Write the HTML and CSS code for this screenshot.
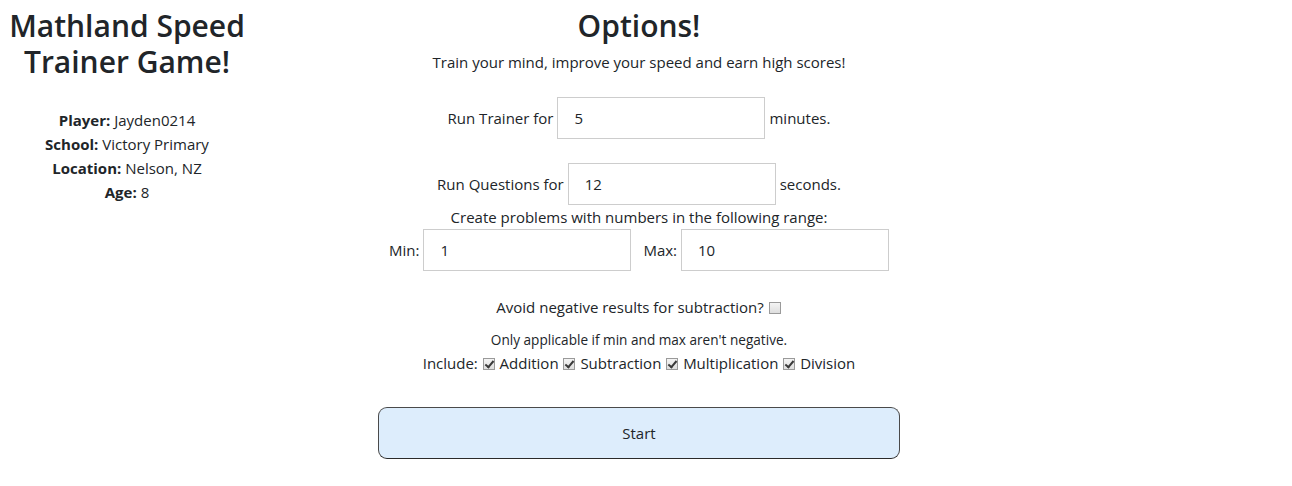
FILE: index.html
```html
<!DOCTYPE html>
<html lang="en">
<head>
<meta charset="utf-8">
<title>Mathland Speed Trainer Game!</title>
<link rel="stylesheet" href="styles.css">
</head>
<body>
<div class="page">
  <aside class="side">
    <h1 class="title">Mathland Speed Trainer Game!</h1>
    <div class="info">
      <div><b>Player:</b> Jayden0214</div>
      <div><b>School:</b> Victory Primary</div>
      <div><b>Location:</b> Nelson, NZ</div>
      <div><b>Age:</b> 8</div>
    </div>
  </aside>
  <main class="main">
    <h2 class="title">Options!</h2>
    <p class="sub">Train your mind, improve your speed and earn high scores!</p>
    <div class="row row-trainer">
      <span>Run Trainer for</span>
      <input class="field" type="text" value="5">
      <span>minutes.</span>
    </div>
    <div class="row row-questions">
      <span>Run Questions for</span>
      <input class="field" type="text" value="12">
      <span>seconds.</span>
    </div>
    <p class="range-label">Create problems with numbers in the following range:</p>
    <div class="row row-range">
      <span>Min:</span>
      <input class="field" type="text" value="1">
      <span class="max-label">Max:</span>
      <input class="field" type="text" value="10">
    </div>
    <div class="avoid">Avoid negative results for subtraction? <input class="cb" type="checkbox"></div>
    <p class="note">Only applicable if min and max aren't negative.</p>
    <div class="include">Include: <input class="cb" type="checkbox" checked> Addition <input class="cb" type="checkbox" checked> Subtraction <input class="cb" type="checkbox" checked> Multiplication <input class="cb" type="checkbox" checked> Division</div>
    <button class="start" type="button">Start</button>
  </main>
</div>
</body>
</html>
```
FILE: styles.css
```css
* { box-sizing: border-box; }
body {
  margin: 0;
  font-family: "Open Sans", "Noto Sans", sans-serif;
  font-size: 15px;
  line-height: 24px;
  color: #212529;
  background: #fff;
}
.page {
  display: grid;
  grid-template-columns: 254px 770px;
  padding-top: 8px;
}
.side, .main { text-align: center; }
.title {
  margin: 0;
  font-size: 30px;
  line-height: 36px;
  font-weight: 600;
}
.info { margin-top: 28px; }
.info b { font-weight: 700; }
.sub { margin: 6px 0 0; }
.row {
  display: flex;
  justify-content: center;
  align-items: center;
  gap: 4px;
}
.row-trainer { margin-top: 23px; }
.row-questions { margin-top: 24px; }
.field {
  width: 208px;
  height: 42px;
  border: 1px solid #cdcdcd;
  padding: 0 16px;
  font: inherit;
  color: #212529;
  margin: 0;
}
.range-label { margin: 0; }
.max-label { margin-left: 8px; }
.avoid { margin-top: 24px; }
.note { margin: 9px 0 0; font-size: 13.6px; line-height: 24px; }
.include { margin-top: -1px; }
.cb {
  appearance: none;
  -webkit-appearance: none;
  width: 12px;
  height: 12px;
  margin: 0 1px;
  border: 1px solid #9a9a9a;
  background: linear-gradient(#f4f4f4, #dedede);
  vertical-align: -1px;
  position: relative;
}
.cb:checked::after {
  content: "";
  position: absolute;
  left: 3px;
  top: 0px;
  width: 3px;
  height: 7px;
  border: solid #3a3a3a;
  border-width: 0 2px 2px 0;
  transform: rotate(40deg);
}
.start {
  display: block;
  margin: 32px auto 0;
  width: 522px;
  height: 52px;
  border: 1px solid #4a4a4a;
  border-bottom-color: #2a2a2a;
  border-radius: 9px;
  background: #ddedfc;
  font: inherit;
  color: #212529;
}
```
